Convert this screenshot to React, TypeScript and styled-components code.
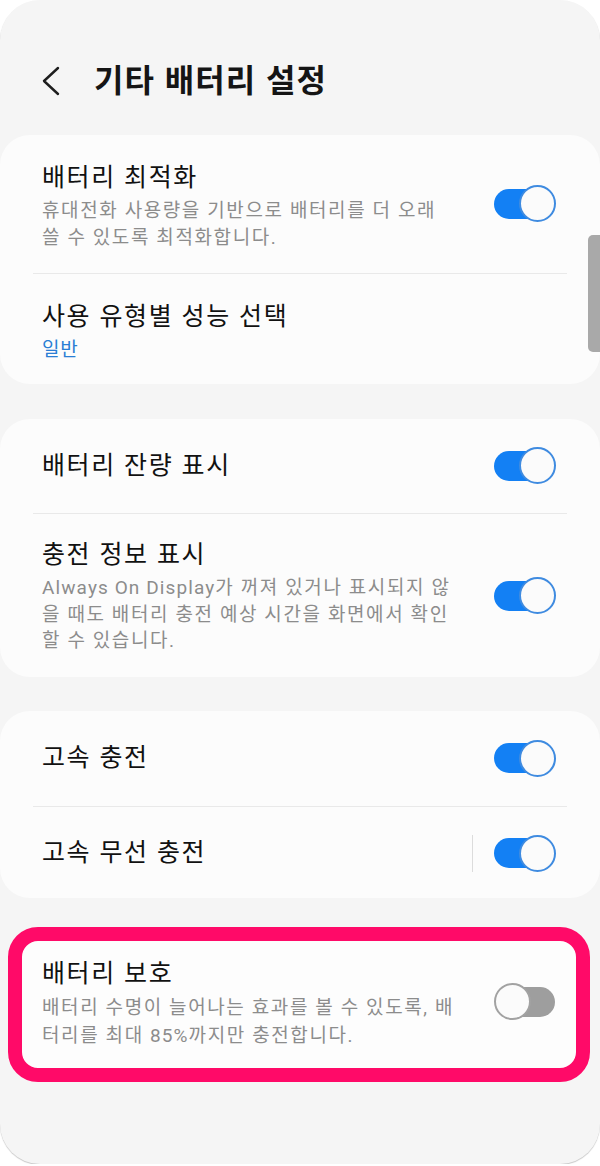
import React from "react";
import styled, { createGlobalStyle } from "styled-components";

const GlobalStyle = createGlobalStyle`
  html, body {
    margin: 0;
    padding: 0;
    background: #ffffff;
  }
  body {
    font-family: Roboto, "Noto Sans CJK KR", sans-serif;
  }
`;

const Frame = styled.div`
  position: relative;
  width: 600px;
  height: 1164px;
  border-radius: 40px;
  background: #f5f5f5;
  overflow: hidden;
  box-shadow: 0 1px 1px rgba(0, 0, 0, 0.22);
  display: flex;
  flex-direction: column;
  font-family: Roboto, "Noto Sans CJK KR", sans-serif;
`;

const Header = styled.header`
  height: 135px;
  box-sizing: border-box;
  padding: 27px 0 0 42px;
  display: flex;
  align-items: center;
  gap: 34px;
`;

const BackButton = styled.button`
  width: 18px;
  height: 30px;
  padding: 0;
  border: none;
  background: transparent;
  display: flex;
  align-items: center;
  justify-content: center;
`;

const Title = styled.h1`
  margin: 0;
  font-size: 32px;
  line-height: 38px;
  font-weight: 700;
  letter-spacing: 1px;
  word-spacing: 1px;
  color: #151515;
`;

const List = styled.div`
  display: flex;
  flex-direction: column;
`;

const Card = styled.section<{ $mt: number }>`
  margin-top: ${(p) => p.$mt}px;
  background: #fcfcfc;
  border-radius: 30px;
  display: flex;
  flex-direction: column;
`;

const HighlightCard = styled.section<{ $mt: number }>`
  margin: ${(p) => p.$mt}px 10px 0 8px;
  background: #fdfdfd;
  border: 14px solid #ff0a68;
  border-radius: 30px;
  display: flex;
  flex-direction: column;
`;

const Row = styled.div<{ $pt: number; $pb: number; $pl: number; $pr: number }>`
  display: flex;
  align-items: center;
  padding: ${(p) => p.$pt}px ${(p) => p.$pr}px ${(p) => p.$pb}px
    ${(p) => p.$pl}px;
`;

const TextBlock = styled.div`
  flex: 1;
  min-width: 0;
  display: flex;
  flex-direction: column;
`;

const ItemTitle = styled.div`
  font-size: 25px;
  line-height: 32px;
  font-weight: 400;
  letter-spacing: 1.6px;
  word-spacing: 0.5px;
  color: #111111;
  white-space: nowrap;
`;

const Sub = styled.div<{ $lh: number; $blue?: boolean }>`
  margin-top: 4px;
  font-size: 19px;
  line-height: ${(p) => p.$lh}px;
  letter-spacing: ${(p) => (p.$blue ? 0.8 : 1.6)}px;
  color: ${(p) => (p.$blue ? "#2a7ed4" : "#8c8c8c")};
  white-space: nowrap;
`;

const Latin = styled.span`
  letter-spacing: 1.1px;
`;

const SubLine = styled.span`
  display: block;
`;

const Divider = styled.div`
  height: 1px;
  margin: 0 33px;
  background: #e9e9e9;
`;

const VSep = styled.div`
  width: 1px;
  height: 37px;
  background: #dcdcdc;
  margin-right: 21px;
`;

const SwitchBox = styled.div<{ $lift: number }>`
  position: relative;
  width: 61px;
  height: 37px;
  flex: none;
  margin: ${(p) => -p.$lift}px 0 ${(p) => p.$lift}px;
`;

const Track = styled.div<{ $on: boolean }>`
  position: absolute;
  top: 3.5px;
  left: ${(p) => (p.$on ? 0 : 3)}px;
  right: ${(p) => (p.$on ? 3 : 0)}px;
  height: 30px;
  border-radius: 15px;
  background: ${(p) => (p.$on ? "#1380f4" : "#9e9e9e")};
`;

const Thumb = styled.div<{ $on: boolean }>`
  position: absolute;
  top: 0;
  left: ${(p) => (p.$on ? 25 : 0)}px;
  width: 37px;
  height: 37px;
  box-sizing: border-box;
  border-radius: 50%;
  background: #fbfbfb;
  border: 2px solid ${(p) => (p.$on ? "#3f8be0" : "#a2a2a2")};
`;

const ScrollBar = styled.div`
  position: absolute;
  right: 0;
  top: 235px;
  width: 12px;
  height: 117px;
  border-radius: 5px 0 0 5px;
  background: #a9a9a9;
`;

function Switch({ on, lift = 0 }: { on: boolean; lift?: number }) {
  return (
    <SwitchBox $lift={lift}>
      <Track $on={on} />
      <Thumb $on={on} />
    </SwitchBox>
  );
}

function ChevronLeft() {
  return (
    <svg width="18" height="30" viewBox="0 0 18 30" fill="none">
      <path
        d="M16 2 L2 15 L16 28"
        stroke="#1e1e1e"
        strokeWidth="2.4"
        strokeLinecap="round"
        strokeLinejoin="round"
      />
    </svg>
  );
}

export default function App() {
  return (
    <>
      <GlobalStyle />
      <Frame>
        <Header>
          <BackButton aria-label="뒤로">
            <ChevronLeft />
          </BackButton>
          <Title>기타 배터리 설정</Title>
        </Header>

        <List>
          <Card $mt={0}>
            <Row $pt={27} $pb={22} $pl={42} $pr={45}>
              <TextBlock>
                <ItemTitle>배터리 최적화</ItemTitle>
                <Sub $lh={26.5}>
                  <SubLine>휴대전화 사용량을 기반으로 배터리를 더 오래</SubLine>
                  <SubLine>쓸 수 있도록 최적화합니다.</SubLine>
                </Sub>
              </TextBlock>
              <Switch on lift={3} />
            </Row>
            <Divider />
            <Row $pt={27} $pb={21} $pl={42} $pr={45}>
              <TextBlock>
                <ItemTitle>사용 유형별 성능 선택</ItemTitle>
                <Sub $lh={26} $blue>
                  일반
                </Sub>
              </TextBlock>
            </Row>
          </Card>

          <Card $mt={35}>
            <Row $pt={28} $pb={29} $pl={42} $pr={45}>
              <TextBlock>
                <ItemTitle>배터리 잔량 표시</ItemTitle>
              </TextBlock>
              <Switch on />
            </Row>
            <Divider />
            <Row $pt={25} $pb={22} $pl={42} $pr={45}>
              <TextBlock>
                <ItemTitle>충전 정보 표시</ItemTitle>
                <Sub $lh={26.5}>
                  <SubLine>
                    <Latin>Always On Display</Latin>가 꺼져 있거나 표시되지 않
                  </SubLine>
                  <SubLine>을 때도 배터리 충전 예상 시간을 화면에서 확인</SubLine>
                  <SubLine>할 수 있습니다.</SubLine>
                </Sub>
              </TextBlock>
              <Switch on lift={1} />
            </Row>
          </Card>

          <Card $mt={34}>
            <Row $pt={29} $pb={29} $pl={42} $pr={45}>
              <TextBlock>
                <ItemTitle>고속 충전</ItemTitle>
              </TextBlock>
              <Switch on />
            </Row>
            <Divider />
            <Row $pt={28} $pb={26} $pl={42} $pr={45}>
              <TextBlock>
                <ItemTitle>고속 무선 충전</ItemTitle>
              </TextBlock>
              <VSep />
              <Switch on />
            </Row>
          </Card>

          <HighlightCard $mt={29}>
            <Row $pt={17} $pb={18} $pl={20} $pr={21}>
              <TextBlock>
                <ItemTitle>배터리 보호</ItemTitle>
                <Sub $lh={28}>
                  <SubLine>배터리 수명이 늘어나는 효과를 볼 수 있도록, 배</SubLine>
                  <SubLine>
                    터리를 최대 <Latin>85%</Latin>까지만 충전합니다.
                  </SubLine>
                </Sub>
              </TextBlock>
              <Switch on={false} lift={2} />
            </Row>
          </HighlightCard>
        </List>

        <ScrollBar />
      </Frame>
    </>
  );
}
